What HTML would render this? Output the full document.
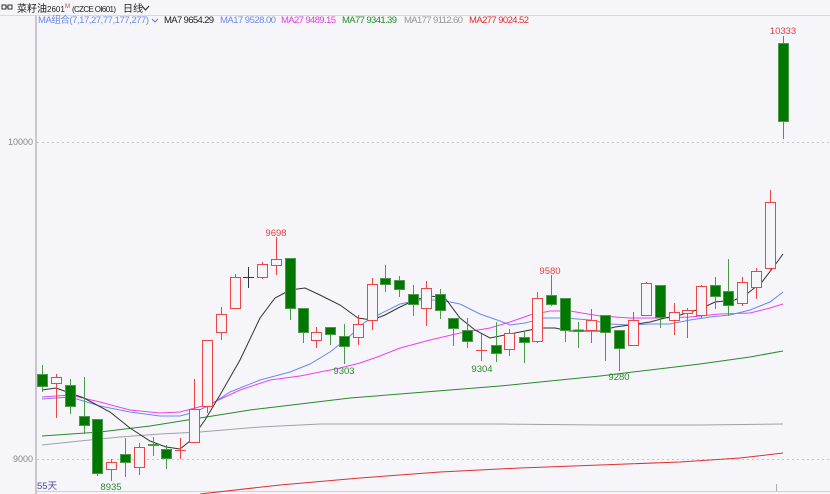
<!DOCTYPE html>
<html><head><meta charset="utf-8"><style>
body{margin:0;width:830px;height:494px;overflow:hidden;background:#f5f5fa;font-family:"Liberation Sans","Noto Sans CJK SC",sans-serif}
svg{position:absolute;left:0;top:0}
</style></head><body>
<svg width="830" height="494" xmlns="http://www.w3.org/2000/svg" font-family="Liberation Sans, Noto Sans CJK SC, sans-serif">
<rect width="830" height="494" fill="#f5f5fa"/>
<!-- header -->
<rect x="2" y="5" width="4" height="4" fill="none" stroke="#333" stroke-width="1"/>
<rect x="8" y="5" width="4" height="4" fill="none" stroke="#333" stroke-width="1"/>
<line x1="6" y1="7" x2="8" y2="7" stroke="#333"/>
<text x="17" y="12" font-size="10" fill="#222">菜籽油</text>
<text x="47" y="12" font-size="8" fill="#222">2601</text>
<text x="65" y="8" font-size="6" fill="#e03030">M</text>
<text x="72" y="12" font-size="8" fill="#222" textLength="44">(CZCE OI601)</text>
<text x="123" y="12" font-size="10" fill="#222">日线</text>
<path d="M142 6 L145.5 10 L149 6" fill="none" stroke="#333" stroke-width="1.2"/>
<line x1="0" y1="15.5" x2="830" y2="15.5" stroke="#d8d8e0"/>
<g font-size="9.5">
<text y="23" fill="#6a8ae8" x="38" textLength="111">MA组合(7,17,27,77,177,277)</text>
<text y="23" x="164" fill="#222" textLength="50">MA7 9654.29</text>
<text y="23" x="220" fill="#6a8ae8" textLength="56">MA17 9528.00</text>
<text y="23" x="281" fill="#e040e0" textLength="55">MA27 9489.15</text>
<text y="23" x="342" fill="#2a8a2a" textLength="55">MA77 9341.39</text>
<text y="23" x="404" fill="#999" textLength="59">MA177 9112.60</text>
<text y="23" x="469" fill="#e03030" textLength="60">MA277 9024.52</text>
</g>
<path d="M152 19 L155 22 L158 19" fill="none" stroke="#5a7ae0" stroke-width="1"/>
<!-- axis -->
<rect x="35" y="16" width="2" height="478" fill="#c8c8cc"/>
<line x1="37" y1="142.5" x2="830" y2="142.5" stroke="#c8c8c8" stroke-dasharray="2,3"/>
<line x1="37" y1="459.5" x2="830" y2="459.5" stroke="#c8c8c8" stroke-dasharray="2,3"/>
<text x="33" y="145" font-size="9" fill="#888" text-anchor="end">10000</text>
<text x="33" y="462" font-size="9" fill="#888" text-anchor="end">9000</text>
<line x1="37" y1="491.5" x2="830" y2="491.5" stroke="#d0d0d8"/>
<line x1="776.5" y1="484" x2="776.5" y2="491" stroke="#aaa"/>
<text x="37" y="489" font-size="9.5" fill="#4a4aa8">55天</text>
<!-- MA lines -->
<g fill="none" stroke-width="1">
<polyline stroke="#e03030" points="200,494 280,485 360,478 440,472 520,468 600,465 680,462 740,458 783,453"/>
<polyline stroke="#a0a0a8" points="42,445 80,441 120,437 160,434 200,432 260,427 320,424 400,424 500,424 600,425 700,425 783,424"/>
<polyline stroke="#2a8a2a" points="42,436 100,432 150,426 200,418 250,410 300,404 350,398 400,394 450,390 500,386 550,381 600,376 650,370 700,364 750,357 783,351"/>
<polyline stroke="#f040f0" points="42,397 70,395 100,402 130,410 160,413 180,412 210,404 240,390 270,380 300,376 320,372 340,368 360,363 380,356 400,348 430,340 460,333 490,328 510,322 530,315 550,311 570,311 600,316 630,318 660,318 690,317 720,314 750,313 770,308 783,304"/>
<polyline stroke="#6a8ae8" points="42,399 70,397 100,406 130,412 160,416 180,416 195,412 210,405 230,392 260,380 290,372 310,364 330,352 350,336 365,322 380,314 400,304 420,300 440,300 460,304 480,314 500,321 510,325 525,323 545,318 565,318 590,320 610,324 630,325 650,324 670,324 690,320 710,317 730,315 750,310 770,302 783,292"/>
<polyline stroke="#333" points="42,390 56,388 84,398 110,412 130,428 150,441 166,447 180,449 190,441 205,420 220,395 240,360 260,318 275,298 290,290 305,288 320,295 340,305 358,318 372,320 385,315 400,307 415,300 430,296 445,298 460,318 475,330 490,338 505,335 520,332 540,328 555,328 570,331 600,331 615,327 630,325 650,322 665,318 680,315 700,309 715,302 735,300 748,293 762,282 775,265 783,254"/>
</g>
<!-- candles: green -->
<g stroke="#4a9a4a" fill="#007800">
<line x1="42.5" y1="365" x2="42.5" y2="392"/><rect x="37.5" y="374.5" width="10" height="12"/>
<line x1="70.5" y1="379" x2="70.5" y2="414"/><rect x="65.5" y="385.5" width="10" height="21"/>
<line x1="84.5" y1="377" x2="84.5" y2="434"/><rect x="79.5" y="416.5" width="10" height="9"/>
<line x1="97.5" y1="419" x2="97.5" y2="476"/><rect x="92.5" y="419.5" width="10" height="54"/>
<line x1="125.5" y1="438" x2="125.5" y2="477"/><rect x="120.5" y="454.5" width="10" height="8"/>
<line x1="153.5" y1="437" x2="153.5" y2="456"/><rect x="148.5" y="444.5" width="10" height="1"/>
<line x1="166.5" y1="445" x2="166.5" y2="469"/><rect x="161.5" y="449.5" width="10" height="9"/>
<line x1="290.5" y1="258" x2="290.5" y2="320"/><rect x="285.5" y="258.5" width="10" height="50"/>
<line x1="303.5" y1="308" x2="303.5" y2="343"/><rect x="298.5" y="308.5" width="10" height="24"/>
<line x1="330.5" y1="327" x2="330.5" y2="345"/><rect x="325.5" y="327.5" width="10" height="7"/>
<line x1="344.5" y1="324" x2="344.5" y2="364"/><rect x="339.5" y="336.5" width="10" height="10"/>
<line x1="385.5" y1="265" x2="385.5" y2="292"/><rect x="380.5" y="278.5" width="10" height="6"/>
<line x1="399.5" y1="276" x2="399.5" y2="297"/><rect x="394.5" y="280.5" width="10" height="9"/>
<line x1="413.5" y1="285" x2="413.5" y2="316"/><rect x="408.5" y="294.5" width="10" height="10"/>
<line x1="440.5" y1="289" x2="440.5" y2="319"/><rect x="435.5" y="294.5" width="10" height="16"/>
<line x1="453.5" y1="318" x2="453.5" y2="346"/><rect x="448.5" y="318.5" width="10" height="10"/>
<line x1="467.5" y1="318" x2="467.5" y2="348"/><rect x="462.5" y="330.5" width="10" height="11"/>
<line x1="496.5" y1="322" x2="496.5" y2="362"/><rect x="491.5" y="345.5" width="10" height="8"/>
<line x1="524.5" y1="332" x2="524.5" y2="363"/><rect x="519.5" y="337.5" width="10" height="5"/>
<line x1="551.5" y1="275" x2="551.5" y2="306"/><rect x="546.5" y="295.5" width="10" height="9"/>
<line x1="565.5" y1="298" x2="565.5" y2="342"/><rect x="560.5" y="298.5" width="10" height="32"/>
<line x1="578.5" y1="322" x2="578.5" y2="348"/><rect x="573.5" y="330" width="10" height="1.5"/>
<line x1="605.5" y1="315" x2="605.5" y2="361"/><rect x="600.5" y="315.5" width="10" height="17"/>
<line x1="619.5" y1="330" x2="619.5" y2="371"/><rect x="614.5" y="330.5" width="10" height="18"/>
<line x1="660.5" y1="285" x2="660.5" y2="328"/><rect x="655.5" y="285.5" width="10" height="32"/>
<line x1="715.5" y1="277" x2="715.5" y2="309"/><rect x="710.5" y="285.5" width="10" height="11"/>
<line x1="728.5" y1="259" x2="728.5" y2="316"/><rect x="723.5" y="291.5" width="10" height="14"/>
<line x1="783.5" y1="36" x2="783.5" y2="139"/><rect x="778.5" y="43.5" width="10" height="78"/>
</g>
<!-- candles: red -->
<g stroke="#ee4444" fill="none">
<line x1="56.5" y1="374" x2="56.5" y2="418"/><rect x="51.5" y="377.5" width="10" height="6" fill="#f5f5fa"/>
<line x1="111.5" y1="459" x2="111.5" y2="481"/><rect x="106.5" y="462.5" width="10" height="7" fill="#f5f5fa"/>
<line x1="139.5" y1="443" x2="139.5" y2="475"/><rect x="134.5" y="447.5" width="10" height="20" fill="#f5f5fa"/>
<line x1="180.5" y1="438" x2="180.5" y2="459"/><line x1="175" y1="450.5" x2="186" y2="450.5"/>
<line x1="194.5" y1="379" x2="194.5" y2="442"/><rect x="189.5" y="409.5" width="10" height="33" fill="#f5f5fa"/>
<line x1="207.5" y1="360" x2="207.5" y2="413"/><rect x="202.5" y="340.5" width="10" height="66" fill="#f5f5fa"/>
<line x1="221.5" y1="307" x2="221.5" y2="340"/><rect x="216.5" y="314.5" width="10" height="18" fill="#f5f5fa"/>
<line x1="235.5" y1="274" x2="235.5" y2="308"/><rect x="230.5" y="277.5" width="10" height="31" fill="#f5f5fa"/>
<line x1="262.5" y1="262" x2="262.5" y2="279"/><rect x="257.5" y="264.5" width="10" height="13" fill="#f5f5fa"/>
<line x1="276.5" y1="237" x2="276.5" y2="275"/><rect x="271.5" y="259.5" width="10" height="6" fill="#f5f5fa"/>
<line x1="316.5" y1="327" x2="316.5" y2="348"/><rect x="311.5" y="332.5" width="10" height="8" fill="#f5f5fa"/>
<line x1="358.5" y1="315" x2="358.5" y2="345"/><rect x="353.5" y="324.5" width="10" height="13" fill="#f5f5fa"/>
<line x1="372.5" y1="278" x2="372.5" y2="330"/><rect x="367.5" y="284.5" width="10" height="36" fill="#f5f5fa"/>
<line x1="426.5" y1="281" x2="426.5" y2="326"/><rect x="421.5" y="288.5" width="10" height="20" fill="#f5f5fa"/>
<line x1="481.5" y1="334" x2="481.5" y2="361"/><line x1="476" y1="350.5" x2="487" y2="350.5"/>
<line x1="509.5" y1="329" x2="509.5" y2="356"/><rect x="504.5" y="333.5" width="10" height="16" fill="#f5f5fa"/>
<line x1="537.5" y1="292" x2="537.5" y2="343"/><rect x="532.5" y="298.5" width="10" height="43" fill="#f5f5fa"/>
<line x1="591.5" y1="309" x2="591.5" y2="343"/><rect x="586.5" y="320.5" width="10" height="10" fill="#f5f5fa"/>
<line x1="633.5" y1="312" x2="633.5" y2="346"/><rect x="628.5" y="320.5" width="10" height="25" fill="#f5f5fa"/>
<line x1="646.5" y1="282" x2="646.5" y2="315"/><rect x="641.5" y="283.5" width="10" height="32" fill="#f5f5fa"/>
<line x1="674.5" y1="303" x2="674.5" y2="335"/><rect x="669.5" y="312.5" width="10" height="8" fill="#f5f5fa"/>
<line x1="687.5" y1="308" x2="687.5" y2="338"/><rect x="682.5" y="310.5" width="10" height="3" fill="#f5f5fa"/>
<line x1="701.5" y1="285" x2="701.5" y2="318"/><rect x="696.5" y="286.5" width="10" height="29" fill="#f5f5fa"/>
<line x1="742.5" y1="277" x2="742.5" y2="306"/><rect x="737.5" y="282.5" width="10" height="21" fill="#f5f5fa"/>
<line x1="756.5" y1="268" x2="756.5" y2="299"/><rect x="751.5" y="271.5" width="10" height="16" fill="#f5f5fa"/>
<line x1="770.5" y1="190" x2="770.5" y2="272"/><rect x="765.5" y="202.5" width="10" height="66" fill="#f5f5fa"/>
</g>
<g stroke="#333"><line x1="248.5" y1="267" x2="248.5" y2="288"/><line x1="243" y1="277.5" x2="254" y2="277.5"/></g>
<!-- labels -->
<g font-size="9.5" text-anchor="middle">
<text x="783" y="34" fill="#e84040">10333</text>
<text x="276" y="236" fill="#e84040">9698</text>
<text x="550" y="274" fill="#e84040">9580</text>
<text x="111" y="490" fill="#2a8a2a">8935</text>
<text x="344" y="374" fill="#2a8a2a">9303</text>
<text x="482" y="372" fill="#2a8a2a">9304</text>
<text x="619" y="380" fill="#2a8a2a">9280</text>
</g>
</svg>
</body></html>
